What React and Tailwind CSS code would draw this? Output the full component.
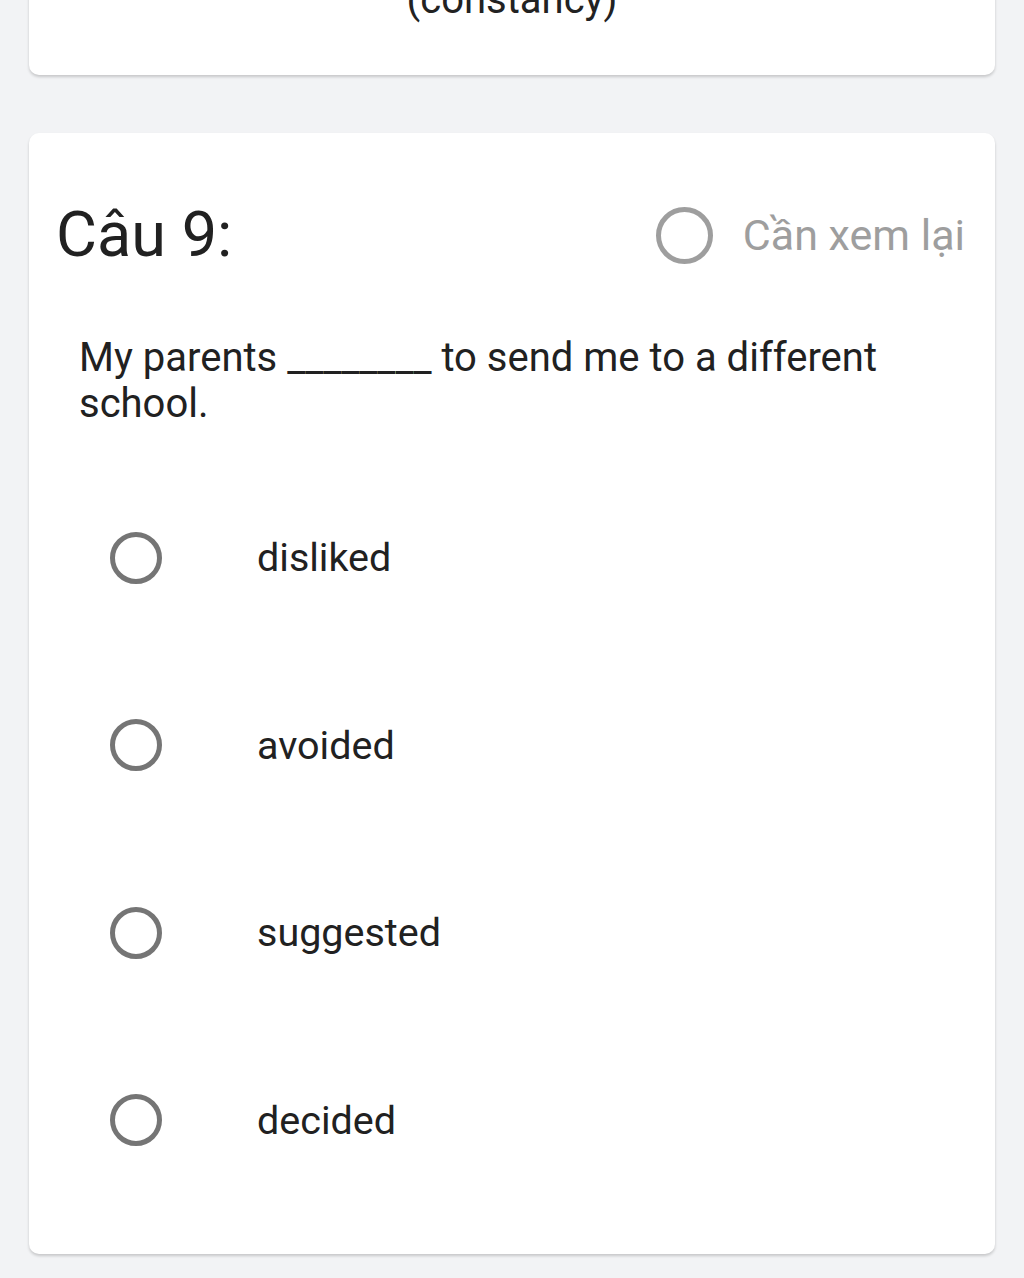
import React from 'react';

const options = ['disliked', 'avoided', 'suggested', 'decided'];

function Ring({ size, color }) {
  return (
    <span
      className={`block rounded-full border-[5px] ${color} ${size}`}
    />
  );
}

export default function App() {
  return (
    <div className="min-h-[1278px] bg-[#f2f3f5] px-[29px] overflow-hidden" style={{ fontFamily: 'Roboto, "Noto Sans", sans-serif' }}>
      <div className="-mt-[40px] rounded-[10px] bg-white pt-[18px] pb-[53px] shadow-[0_2px_3px_rgba(0,0,0,0.18)] text-center text-[40px] leading-[44px] text-[#222]">
        (constancy)
      </div>

      <div className="mt-[58px] rounded-[10px] bg-white pt-[67px] pb-[40px] shadow-[0_2px_3px_rgba(0,0,0,0.18)]">
        <div className="flex items-center justify-between pl-[27px] pr-[30px] h-[70px]">
          <h2 className="text-[63px] leading-[70px] font-normal text-[#212121]">Câu 9:</h2>
          <div className="flex items-center gap-[30px]">
            <Ring size="w-[57px] h-[57px]" color="border-[#9e9e9e]" />
            <span className="text-[43px] text-[#9e9e9e]">Cần xem lại</span>
          </div>
        </div>

        <p className="mt-[65px] pl-[50px] pr-[60px] text-[40px] leading-[46px] text-[#212121]">
          My parents ________ to send me to a different school.
        </p>

        <div className="mt-[37px] flex flex-col pl-[81px]">
          {options.map((opt) => (
            <div key={opt} className="flex h-[187.5px] items-center gap-[95px]">
              <Ring size="w-[52px] h-[52px]" color="border-[#757575]" />
              <span className="text-[39.5px] text-[#212121]">{opt}</span>
            </div>
          ))}
        </div>
      </div>
    </div>
  );
}
